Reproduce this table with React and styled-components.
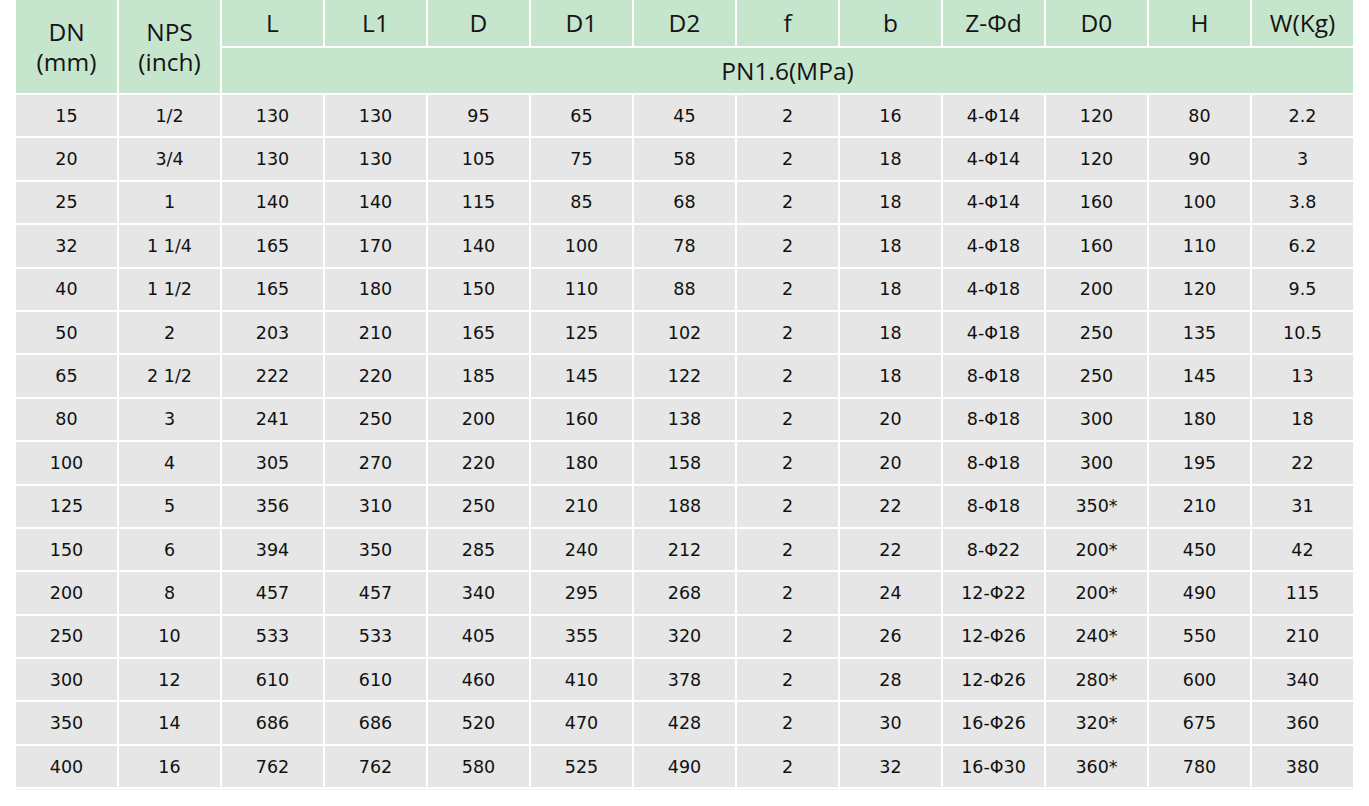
import React from 'react';
import styled, { createGlobalStyle } from 'styled-components';

const GlobalStyle = createGlobalStyle`
  body {
    margin: 0;
    background: #ffffff;
    font-family: "DejaVu Sans", sans-serif;
  }
`;

const Page = styled.div`
  padding: 0 0 20px 14px;
  margin-top: -2px;
`;

const Table = styled.table`
  border-collapse: separate;
  border-spacing: 2px;
  table-layout: fixed;
  width: 1341px;
`;

const HeadCell = styled.th`
  background: #c6e5cd;
  color: #141414;
  font-family: "Open Sans", "Noto Sans", sans-serif;
  font-weight: 400;
  font-size: 24.5px;
  line-height: 30px;
  text-align: center;
  vertical-align: middle;
  padding: 0;
  height: ${props => props.h || 46}px;
  width: 101px;
`;

const Cell = styled.td`
  background: #e6e6e6;
  color: #111111;
  font-family: "DejaVu Sans", sans-serif;
  font-size: 17.5px;
  text-align: center;
  vertical-align: middle;
  padding: 0;
  height: 41.4px;
`;

const EdgeCell = styled.td`
  background: #f1f1f1;
  padding: 0;
  height: 1px;
`;

const columns = ['L', 'L1', 'D', 'D1', 'D2', 'f', 'b', 'Z-Φd', 'D0', 'H', 'W(Kg)'];

const rows = [
  ['15', '1/2', '130', '130', '95', '65', '45', '2', '16', '4-Φ14', '120', '80', '2.2'],
  ['20', '3/4', '130', '130', '105', '75', '58', '2', '18', '4-Φ14', '120', '90', '3'],
  ['25', '1', '140', '140', '115', '85', '68', '2', '18', '4-Φ14', '160', '100', '3.8'],
  ['32', '1 1/4', '165', '170', '140', '100', '78', '2', '18', '4-Φ18', '160', '110', '6.2'],
  ['40', '1 1/2', '165', '180', '150', '110', '88', '2', '18', '4-Φ18', '200', '120', '9.5'],
  ['50', '2', '203', '210', '165', '125', '102', '2', '18', '4-Φ18', '250', '135', '10.5'],
  ['65', '2 1/2', '222', '220', '185', '145', '122', '2', '18', '8-Φ18', '250', '145', '13'],
  ['80', '3', '241', '250', '200', '160', '138', '2', '20', '8-Φ18', '300', '180', '18'],
  ['100', '4', '305', '270', '220', '180', '158', '2', '20', '8-Φ18', '300', '195', '22'],
  ['125', '5', '356', '310', '250', '210', '188', '2', '22', '8-Φ18', '350*', '210', '31'],
  ['150', '6', '394', '350', '285', '240', '212', '2', '22', '8-Φ22', '200*', '450', '42'],
  ['200', '8', '457', '457', '340', '295', '268', '2', '24', '12-Φ22', '200*', '490', '115'],
  ['250', '10', '533', '533', '405', '355', '320', '2', '26', '12-Φ26', '240*', '550', '210'],
  ['300', '12', '610', '610', '460', '410', '378', '2', '28', '12-Φ26', '280*', '600', '340'],
  ['350', '14', '686', '686', '520', '470', '428', '2', '30', '16-Φ26', '320*', '675', '360'],
  ['400', '16', '762', '762', '580', '525', '490', '2', '32', '16-Φ30', '360*', '780', '380'],
];

const App = () => (
  <Page>
    <GlobalStyle />
    <Table>
      <thead>
        <tr>
          <HeadCell rowSpan={2}>DN<br />(mm)</HeadCell>
          <HeadCell rowSpan={2}>NPS<br />(inch)</HeadCell>
          {columns.map(c => (
            <HeadCell key={c}>{c}</HeadCell>
          ))}
        </tr>
        <tr>
          <HeadCell colSpan={11} h={45}>PN1.6(MPa)</HeadCell>
        </tr>
      </thead>
      <tbody>
        {rows.map(r => (
          <tr key={r[0]}>
            {r.map((v, i) => (
              <Cell key={i}>{v}</Cell>
            ))}
          </tr>
        ))}
        <tr>
          {rows[0].map((_, i) => (
            <EdgeCell key={i} />
          ))}
        </tr>
      </tbody>
    </Table>
  </Page>
);

export default App;
